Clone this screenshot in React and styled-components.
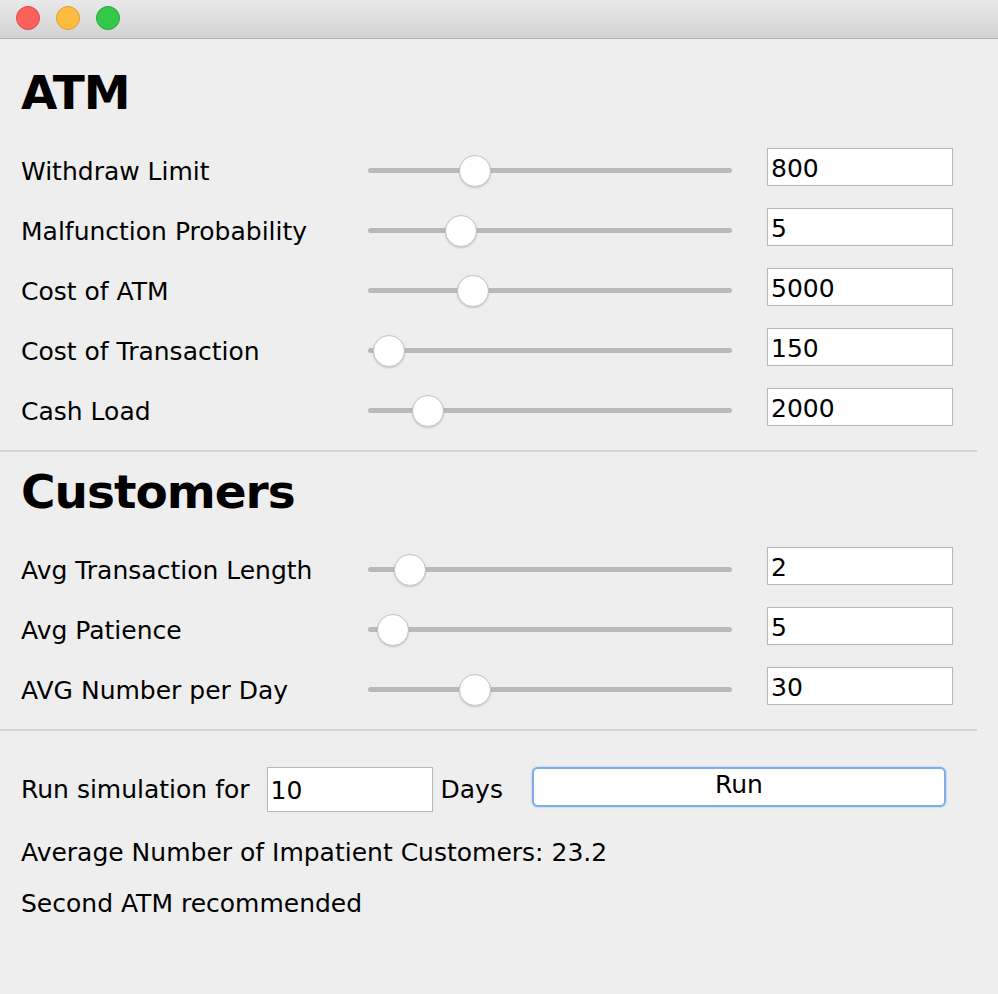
import React from 'react'
import styled, { createGlobalStyle } from 'styled-components'

const GlobalStyle = createGlobalStyle`
    html, body {
        margin: 0;
        padding: 0;
        background: #eeeeee;
    }
    body {
        font-family: "DejaVu Sans", "Liberation Sans", sans-serif;
        color: #000;
    }
`

const atmRows = [
    { label: 'Withdraw Limit', value: '800', pos: 106 },
    { label: 'Malfunction Probability', value: '5', pos: 92 },
    { label: 'Cost of ATM', value: '5000', pos: 104 },
    { label: 'Cost of Transaction', value: '150', pos: 20 },
    { label: 'Cash Load', value: '2000', pos: 59 },
]

const customerRows = [
    { label: 'Avg Transaction Length', value: '2', pos: 41 },
    { label: 'Avg Patience', value: '5', pos: 24 },
    { label: 'AVG Number per Day', value: '30', pos: 106 },
]

const lights = [
    { fill: '#fc605b', edge: '#de4a45' },
    { fill: '#fdbc40', edge: '#de9e33' },
    { fill: '#34c84a', edge: '#27a83a' },
]

const SliderRow = ({ label, value, pos }) => (
    <Row>
        <Label>{label}</Label>
        <Slider>
            <Track />
            <Thumb style={{ left: `${pos}px` }} />
        </Slider>
        <Field>{value}</Field>
    </Row>
)

const App = () => {
    return (
        <Window>
            <GlobalStyle />
            <TitleBar>
                {lights.map((l, i) => (
                    <Light key={i} $fill={l.fill} $edge={l.edge} />
                ))}
            </TitleBar>

            <Content>
                <Section $top={30}>
                    <Heading>ATM</Heading>
                    {atmRows.map((r) => (
                        <SliderRow key={r.label} {...r} />
                    ))}
                </Section>

                <Separator />

                <Section $top={16}>
                    <Heading>Customers</Heading>
                    {customerRows.map((r) => (
                        <SliderRow key={r.label} {...r} />
                    ))}
                </Section>

                <Separator />

                <Section $top={36}>
                    <RunRow>
                        <Text>Run simulation for</Text>
                        <DaysField>10</DaysField>
                        <Text>Days</Text>
                        <RunButton>Run</RunButton>
                    </RunRow>
                    <Results>
                        <Text>Average Number of Impatient Customers: 23.2</Text>
                        <Text>Second ATM recommended</Text>
                    </Results>
                </Section>
            </Content>
        </Window>
    )
}

const Window = styled.div`
    width: 998px;
    min-height: 994px;
    background: #eeeeee;
`

const TitleBar = styled.div`
    height: 38px;
    display: flex;
    align-items: center;
    gap: 16px;
    padding-left: 16px;
    background: linear-gradient(#e9e9e9, #d2d2d2);
    border-bottom: 1px solid #b1b1b1;
    box-sizing: content-box;
`

const Light = styled.span`
    width: 22px;
    height: 22px;
    border-radius: 50%;
    background: ${(p) => p.$fill};
    border: 1px solid ${(p) => p.$edge};
    margin-top: -2px;
`

const Content = styled.div`
    width: 977px;
`

const Section = styled.section`
    padding: ${(p) => p.$top}px 24px 0 21px;
`

const Heading = styled.h1`
    margin: 0 0 21px;
    font-size: 47px;
    line-height: 47px;
    font-weight: bold;
    letter-spacing: -1px;
`

const Row = styled.div`
    display: grid;
    grid-template-columns: 347px 364px auto;
    align-items: center;
    height: 60px;
`

const Label = styled.div`
    font-size: 25px;
    line-height: 28px;
    padding-top: 10px;
    white-space: nowrap;
`

const Slider = styled.div`
    position: relative;
    height: 32px;
    margin-top: 7px;
    display: flex;
    align-items: center;
`

const Track = styled.div`
    width: 100%;
    height: 5px;
    border-radius: 3px;
    background: #b9b9b9;
`

const Thumb = styled.div`
    position: absolute;
    top: 0;
    width: 30px;
    height: 30px;
    margin-left: -15px;
    border-radius: 50%;
    background: #ffffff;
    border: 1px solid #c6c6c6;
    box-shadow: 0 1px 2px rgba(0, 0, 0, 0.18);
`

const Field = styled.div`
    width: 186px;
    height: 38px;
    margin-left: 35px;
    box-sizing: border-box;
    background: #ffffff;
    border: 1px solid #b7b7b7;
    padding: 6px 3px 0;
    font-size: 25px;
    line-height: 28px;
`

const Separator = styled.hr`
    margin: 13px 0 0;
    border: none;
    height: 2px;
    background: #d5d5d5;
`

const RunRow = styled.div`
    display: flex;
    align-items: center;
    height: 45px;
`

const Text = styled.div`
    font-size: 25px;
    line-height: 28px;
    white-space: nowrap;
`

const DaysField = styled(Field)`
    width: 166px;
    height: 45px;
    margin: 0 8px 0 17px;
    padding-top: 9px;
`

const RunButton = styled.button`
    margin-left: 29px;
    margin-top: -6px;
    width: 414px;
    height: 40px;
    background: #ffffff;
    border: 2px solid #7eaeea;
    border-radius: 6px;
    box-shadow: 0 0 2px rgba(80, 140, 230, 0.6);
    font-family: "DejaVu Sans", "Liberation Sans", sans-serif;
    font-size: 25px;
    color: #000;
    padding: 0 0 4px;
`

const Results = styled.div`
    display: flex;
    flex-direction: column;
    gap: 23px;
    margin-top: 27px;
`

export default App
